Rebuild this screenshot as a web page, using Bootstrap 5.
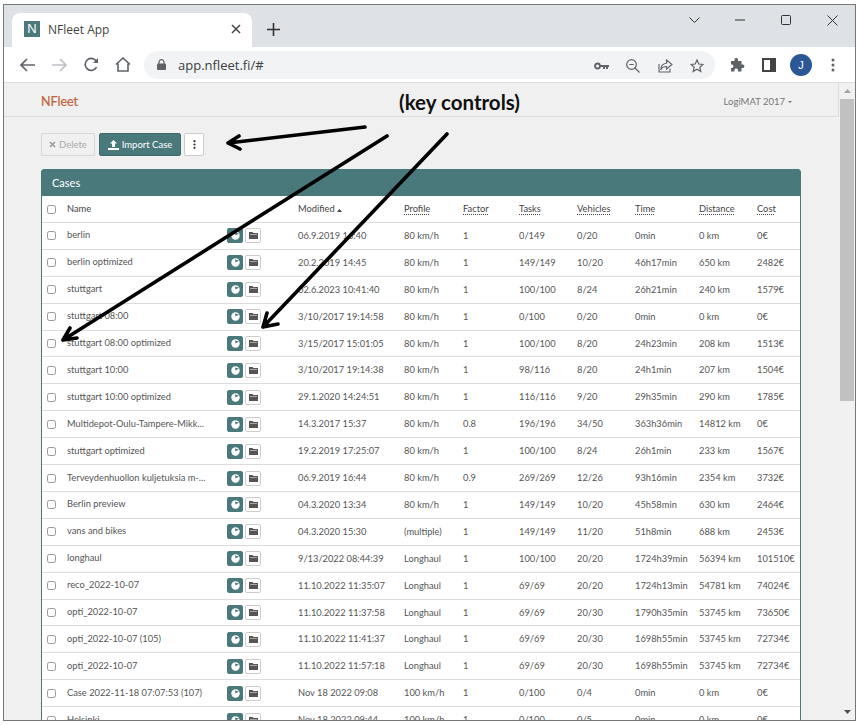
<!DOCTYPE html>
<html lang="en">
<head>
<meta charset="utf-8">
<title>NFleet App</title>
<link href="https://cdn.jsdelivr.net/npm/bootstrap@5.3.0/dist/css/bootstrap.min.css" rel="stylesheet">
<style>
html,body{height:100%;background:#fff;overflow:hidden}
body{font-family:Lato,"Liberation Sans",sans-serif;font-size:9.3px;color:#555;position:relative}
.app-frame{margin:4px 0 0 3px;width:853px;height:717px;border:1px solid #777;overflow:hidden}
.tabstrip{height:42px;background:#dee1e6;padding:8px 0 0 8px}
.tab-pill{width:240px;height:34px;background:#fff;border-radius:8px 8px 0 0;padding:0 11px 2px 12px;font:12px "Open Sans",sans-serif;color:#444}
.fav-n{width:16px;height:16px;background:#4a797b;color:#fff;font:400 13px/16px "Liberation Sans",sans-serif;text-align:center;margin-right:8px}
.new-tab{margin-left:15px;margin-top:-2px}
.win-btns{margin-left:auto;height:30px;margin-top:-8px}
.win-btn{width:46px}
.toolbar-row{height:37px;background:#fff;padding:0 0 0 7px;border-bottom:1px solid #dadce0}
.nav-ic{width:32px;flex:none}
.omni{width:571px;flex:none;height:28px;background:#f1f3f4;border-radius:14px;margin:0 6px 0 5px;padding:0 2px 0 13px;font:13px "Open Sans",sans-serif;color:#3c4043}
.omni-url{margin-left:12px}
.omni-ic{width:32px}
.ava{width:22px;height:22px;border-radius:50%;background:#2b5797;color:#fff;font:11px/22px "Liberation Sans",sans-serif;text-align:center}
.view-area{height:637px;background:#f0f0f0}
.page-main{width:835px;overflow:hidden}
.top-nav{height:34px;background:#f0f0f0;border-bottom:1px solid #dcdcdc;border-right:1px solid #dcdcdc;padding:5px 46px 0 37px}
.brand-n{font-size:12.5px;font-weight:400;color:#c0623a;padding:0;margin:0;-webkit-text-stroke:.2px #c0623a}
.case-menu{font-size:9.5px;color:#777}
.caret-d{display:inline-block;margin-left:3px;border:2px solid transparent;border-top-color:#777;border-bottom:0;vertical-align:middle}
.tool-row{padding:16px 0 13px 37px;height:52px;gap:4px}
.btn-del,.btn-imp,.btn-kb{font-size:9.5px;line-height:1;height:23px;padding:0;border-radius:2px;display:flex;align-items:center;justify-content:center;gap:3px}
.btn-del{width:54px;background:#f0f0f0;border:1px solid #d8d8d8;color:#aaa}
.btn-imp{width:82px;background:#4a797b;border:1px solid #3f6a6c;color:#fff}
.btn-imp:hover{background:#4a797b;color:#fff}
.btn-kb{width:20px;background:#fff;border:1px solid #ccc;margin-left:-1px;color:#333}
.cases-card{width:760px;margin-left:37px;border:1px solid #4a797b;border-radius:3px 3px 0 0;background:#4a797b;overflow:hidden}
.cases-head{height:26px;background:#4a797b;color:#fff;font-size:11px;padding:0 10px;line-height:25px;border:0}
.case-table{table-layout:fixed;width:758px;margin:0;color:#555;font-size:9.3px;border-collapse:collapse}
.case-table th,.case-table td{padding:0 0 0 5px;height:26.92px;vertical-align:middle;font-weight:400;white-space:nowrap;border-bottom:1px solid #dcdcdc;background:#fff;box-shadow:none}
.case-table .nm{padding-bottom:1px;overflow:hidden}
.case-table th{color:#444;height:26.4px;padding-top:1px}
.sort-u{text-decoration:underline dotted;text-underline-offset:2px}
.ck-box{width:9px;height:9px;margin:0;border:1px solid #999;border-radius:2px;display:block;float:none}
.row-btns{gap:2px;display:flex}
.ic-a,.ic-b{width:16px;height:15px;border-radius:2px;display:flex;align-items:center;justify-content:center;padding:0}
.ic-a{background:#4a797b;border:1px solid #4a797b}
.ic-b{background:#fff;border:1px solid #ccc}
.sb-col{width:16px;background:#f1f1f1}
.sb-arrow{height:16px}
.sb-thumb{height:302px;background:#c1c1c1;margin:0 1px}
.arrow-layer{position:absolute;left:0;top:0;pointer-events:none}
.key-note{position:absolute;left:399px;top:89px;font:700 20.5px/26px Lato,sans-serif;color:#111;white-space:nowrap}
</style>
</head>
<body>
<div class="app-frame d-flex flex-column">
  <div class="tabstrip d-flex align-items-start">
    <div class="tab-pill d-flex align-items-center">
      <span class="fav-n">N</span><span>NFleet App</span>
      <svg class="ms-auto" width="10" height="10" viewBox="0 0 10 10"><path d="M1 1l8 8M9 1l-8 8" stroke="#444" stroke-width="1.5"/></svg>
    </div>
    <svg class="new-tab align-self-center" width="13" height="13" viewBox="0 0 13 13"><path d="M6.5 0v13M0 6.5h13" stroke="#333" stroke-width="1.6"/></svg>
    <div class="win-btns d-flex">
      <div class="win-btn d-flex align-items-center justify-content-center"><svg width="11" height="7" viewBox="0 0 11 7"><path d="M.5.5l5 5 5-5" fill="none" stroke="#333"/></svg></div>
      <div class="win-btn d-flex align-items-center justify-content-center"><svg width="10" height="2" viewBox="0 0 10 2"><path d="M0 1h10" stroke="#333"/></svg></div>
      <div class="win-btn d-flex align-items-center justify-content-center"><svg width="10" height="10" viewBox="0 0 10 10"><rect x=".5" y=".5" width="9" height="9" rx="1" fill="none" stroke="#333"/></svg></div>
      <div class="win-btn d-flex align-items-center justify-content-center"><svg width="11" height="11" viewBox="0 0 11 11"><path d="M.5.5l10 10M10.5.5l-10 10" stroke="#333"/></svg></div>
    </div>
  </div>
  <div class="toolbar-row d-flex align-items-center">
    <div class="nav-ic text-center"><svg width="15" height="14" viewBox="0 0 15 14"><path d="M7 1L1 7l6 6M1 7h14" fill="none" stroke="#5f6368" stroke-width="1.7"/></svg></div>
    <div class="nav-ic text-center"><svg width="15" height="14" viewBox="0 0 15 14"><path d="M8 1l6 6-6 6M14 7H0" fill="none" stroke="#bdc1c6" stroke-width="1.7"/></svg></div>
    <div class="nav-ic text-center"><svg width="15" height="15" viewBox="0 0 15 15"><path d="M12.6 10a6 6 0 1 1 .1-5" fill="none" stroke="#5f6368" stroke-width="1.7"/><path d="M14 1v5H9z" fill="#5f6368"/></svg></div>
    <div class="nav-ic text-center"><svg width="16" height="15" viewBox="0 0 16 15"><path d="M1 7.500L8 1l7 6.500M3 6.500V14h10V6.500" fill="none" stroke="#5f6368" stroke-width="1.600"/></svg></div>
    <div class="omni d-flex align-items-center">
      <svg width="9" height="11" viewBox="0 0 9 11"><path d="M2 5V3.200a2.500 2.500 0 0 1 5 0V5" fill="none" stroke="#5f6368" stroke-width="1.200"/><rect y="4.500" width="9" height="6.500" rx="1" fill="#5f6368"/></svg>
      <span class="omni-url">app.nfleet.fi/#</span>
      <div class="ms-auto d-flex align-items-center">
        <div class="omni-ic text-center"><svg width="15" height="8" viewBox="0 0 15 8"><circle cx="3.500" cy="4" r="2.500" fill="none" stroke="#5f6368" stroke-width="1.800"/><path d="M6 3h9v2h-1v2h-2V5h-1v2H9V5H6z" fill="#5f6368"/></svg></div>
        <div class="omni-ic text-center"><svg width="14" height="14" viewBox="0 0 14 14"><circle cx="5.500" cy="5.500" r="4.800" fill="none" stroke="#5f6368" stroke-width="1.200"/><path d="M9 9l4.500 4.500M3.300 5.500h4.400" stroke="#5f6368" stroke-width="1.200"/></svg></div>
        <div class="omni-ic text-center"><svg width="15" height="14" viewBox="0 0 15 14"><path d="M1 5v8h11V9.500M8.500 1l5.500 4.500L8.500 10V7.500C5 7.500 3.500 9 2.800 11c0-4 2-6.500 5.700-6.800z" fill="none" stroke="#5f6368" stroke-width="1.100"/></svg></div>
        <div class="omni-ic text-center"><svg width="14" height="14" viewBox="0 0 14 14"><path d="M7 1l1.800 4 4.200.4-3.200 2.800 1 4.300L7 10.200 3.200 12.500l1-4.300L1 5.400 5.200 5z" fill="none" stroke="#5f6368" stroke-width="1.200"/></svg></div>
      </div>
    </div>
    <div class="nav-ic text-center"><svg width="15" height="15" viewBox="0 0 15 15"><path d="M1 4h3.500V2.500a1.800 1.800 0 0 1 3.500 0V4h3.500v3.500H13a1.800 1.800 0 0 1 0 3.500h-1.500v3.500H8V13a1.800 1.800 0 0 0-3.500 0v1.500H1V11h1a1.800 1.800 0 0 0 0-3.500H1z" fill="#5f6368"/></svg></div>
    <div class="nav-ic text-center"><svg width="14" height="14" viewBox="0 0 14 14"><rect x="1" y="1" width="12" height="12" fill="none" stroke="#444" stroke-width="2"/><rect x="8" y="1" width="5" height="12" fill="#444"/></svg></div>
    <div class="nav-ic d-flex justify-content-center"><div class="ava">J</div></div>
    <div class="nav-ic text-center"><svg width="4" height="14" viewBox="0 0 4 14"><circle cx="2" cy="2" r="1.500" fill="#5f6368"/><circle cx="2" cy="7" r="1.500" fill="#5f6368"/><circle cx="2" cy="12" r="1.500" fill="#5f6368"/></svg></div>
  </div>
  <div class="view-area d-flex">
    <div class="page-main flex-grow-1">
      <nav class="navbar top-nav d-flex justify-content-between">
        <span class="navbar-brand brand-n">NFleet</span>
        <span class="case-menu">LogiMAT 2017<i class="caret-d"></i></span>
      </nav>
      <div class="tool-row d-flex align-items-start">
        <button class="btn btn-del" type="button"><svg width="7" height="7" viewBox="0 0 7 7"><path d="M1 1l5 5M6 1L1 6" stroke="#999" stroke-width="1.600"/></svg>Delete</button>
        <button class="btn btn-imp" type="button"><svg width="11" height="10" viewBox="0 0 11 10"><path d="M5.500 0L9 3.500H7V7H4V3.500H2zM0 8h11v2H0z" fill="#fff"/></svg>Import Case</button>
        <button class="btn btn-kb" type="button"><svg width="3" height="9" viewBox="0 0 3 9"><circle cx="1.500" cy="1.200" r="1.100" fill="#333"/><circle cx="1.500" cy="4.500" r="1.100" fill="#333"/><circle cx="1.500" cy="7.800" r="1.100" fill="#333"/></svg></button>
      </div>
      <div class="card cases-card">
        <div class="card-header cases-head">Cases</div>
        <table class="table case-table" id="tb">
          <colgroup><col style="width:20px"><col style="width:160px"><col style="width:71px"><col style="width:106px"><col style="width:59px"><col style="width:56px"><col style="width:58px"><col style="width:58px"><col style="width:64px"><col style="width:58px"><col style="width:48px"></colgroup>
          <thead><tr>
            <th><input class="form-check-input ck-box" type="checkbox" aria-label="All"></th>
            <th>Name</th><th></th>
            <th>Modified <svg width="5" height="3" viewBox="0 0 5 3" class="align-middle"><path d="M2.500 0L5 3H0z" fill="#444"/></svg></th>
            <th><span class="sort-u">Profile</span></th><th><span class="sort-u">Factor</span></th><th><span class="sort-u">Tasks</span></th><th><span class="sort-u">Vehicles</span></th><th><span class="sort-u">Time</span></th><th><span class="sort-u">Distance</span></th><th><span class="sort-u">Cost</span></th>
          </tr></thead>
          <tbody id="rows"></tbody>
        </table>
      </div>
    </div>
    <div class="sb-col d-flex flex-column">
      <div class="sb-arrow d-flex align-items-center justify-content-center"><svg width="7" height="4" viewBox="0 0 7 4"><path d="M3.500 0L7 4H0z" fill="#a3a3a3"/></svg></div>
      <div class="sb-thumb"></div>
      <div class="sb-arrow mt-auto d-flex align-items-center justify-content-center"><svg width="7" height="4" viewBox="0 0 7 4"><path d="M0 0h7L3.500 4z" fill="#505050"/></svg></div>
    </div>
  </div>
</div>
<div class="key-note">(key controls)</div>
<svg class="arrow-layer" width="861" height="725" viewBox="0 0 861 725">
  <g fill="none" stroke="#000" stroke-width="3.600" stroke-linecap="round" stroke-linejoin="round">
    <path d="M365 127L228 143M239 136L228 143L240 149"/>
    <path d="M387 136L63 340M70 328L63 340L77 338"/>
    <path d="M447 134L263 327M267 313L263 327L278 324"/>
  </g>
</svg>
<script>
const D=[
["berlin","06.9.2019 16:40","80 km/h","1","0/149","0/20","0min","0 km","0€"],
["berlin optimized","20.2.2019 14:45","80 km/h","1","149/149","10/20","46h17min","650 km","2482€"],
["stuttgart","02.6.2023 10:41:40","80 km/h","1","100/100","8/24","26h21min","240 km","1579€"],
["stuttgart 08:00","3/10/2017 19:14:58","80 km/h","1","0/100","0/20","0min","0 km","0€"],
["stuttgart 08:00 optimized","3/15/2017 15:01:05","80 km/h","1","100/100","8/20","24h23min","208 km","1513€"],
["stuttgart 10:00","3/10/2017 19:14:38","80 km/h","1","98/116","8/20","24h1min","207 km","1504€"],
["stuttgart 10:00 optimized","29.1.2020 14:24:51","80 km/h","1","116/116","9/20","29h35min","290 km","1785€"],
["Multidepot-Oulu-Tampere-Mikk...","14.3.2017 15:37","80 km/h","0.8","196/196","34/50","363h36min","14812 km","0€"],
["stuttgart optimized","19.2.2019 17:25:07","80 km/h","1","100/100","8/24","26h1min","233 km","1567€"],
["Terveydenhuollon kuljetuksia m-...","06.9.2019 16:44","80 km/h","0.9","269/269","12/26","93h16min","2354 km","3732€"],
["Berlin preview","04.3.2020 13:34","80 km/h","1","149/149","10/20","45h58min","630 km","2464€"],
["vans and bikes","04.3.2020 15:30","(multiple)","1","149/149","11/20","51h8min","688 km","2453€"],
["longhaul","9/13/2022 08:44:39","Longhaul","1","100/100","20/20","1724h39min","56394 km","101510€"],
["reco_2022-10-07","11.10.2022 11:35:07","Longhaul","1","69/69","20/20","1724h13min","54781 km","74024€"],
["opti_2022-10-07","11.10.2022 11:37:58","Longhaul","1","69/69","20/30","1790h35min","53745 km","73650€"],
["opti_2022-10-07 (105)","11.10.2022 11:41:37","Longhaul","1","69/69","20/30","1698h55min","53745 km","72734€"],
["opti_2022-10-07","11.10.2022 11:57:18","Longhaul","1","69/69","20/30","1698h55min","53745 km","72734€"],
["Case 2022-11-18 07:07:53 (107)","Nov 18 2022 09:08","100 km/h","1","0/100","0/4","0min","0 km","0€"],
["Helsinki","Nov 18 2022 09:44","100 km/h","1","0/100","0/5","0min","0 km","0€"]];
const a='<svg width="9" height="9" viewBox="0 0 9 9"><circle cx="4.500" cy="4.500" r="4.200" fill="#fff"/><path d="M4.500 4.500L8 2.500 4 1.500z" fill="#4a797b"/></svg>';
const b='<svg width="9" height="7" viewBox="0 0 9 7"><path d="M0 0h3.500l1 1H9v6H0z" fill="#555"/><path d="M1 2.500h7" stroke="#ccc" stroke-width=".7"/></svg>';
document.getElementById('rows').innerHTML=D.map(r=>`<tr><td><input class="form-check-input ck-box" type="checkbox" aria-label="Select"></td><td class="nm">${r[0]}</td><td><div class="row-btns"><button class="btn ic-a" type="button">${a}</button><button class="btn ic-b" type="button">${b}</button></div></td>${r.slice(1).map(c=>`<td>${c}</td>`).join('')}</tr>`).join('');
</script>
<script src="https://cdn.jsdelivr.net/npm/bootstrap@5.3.0/dist/js/bootstrap.bundle.min.js"></script>
</body>
</html>
